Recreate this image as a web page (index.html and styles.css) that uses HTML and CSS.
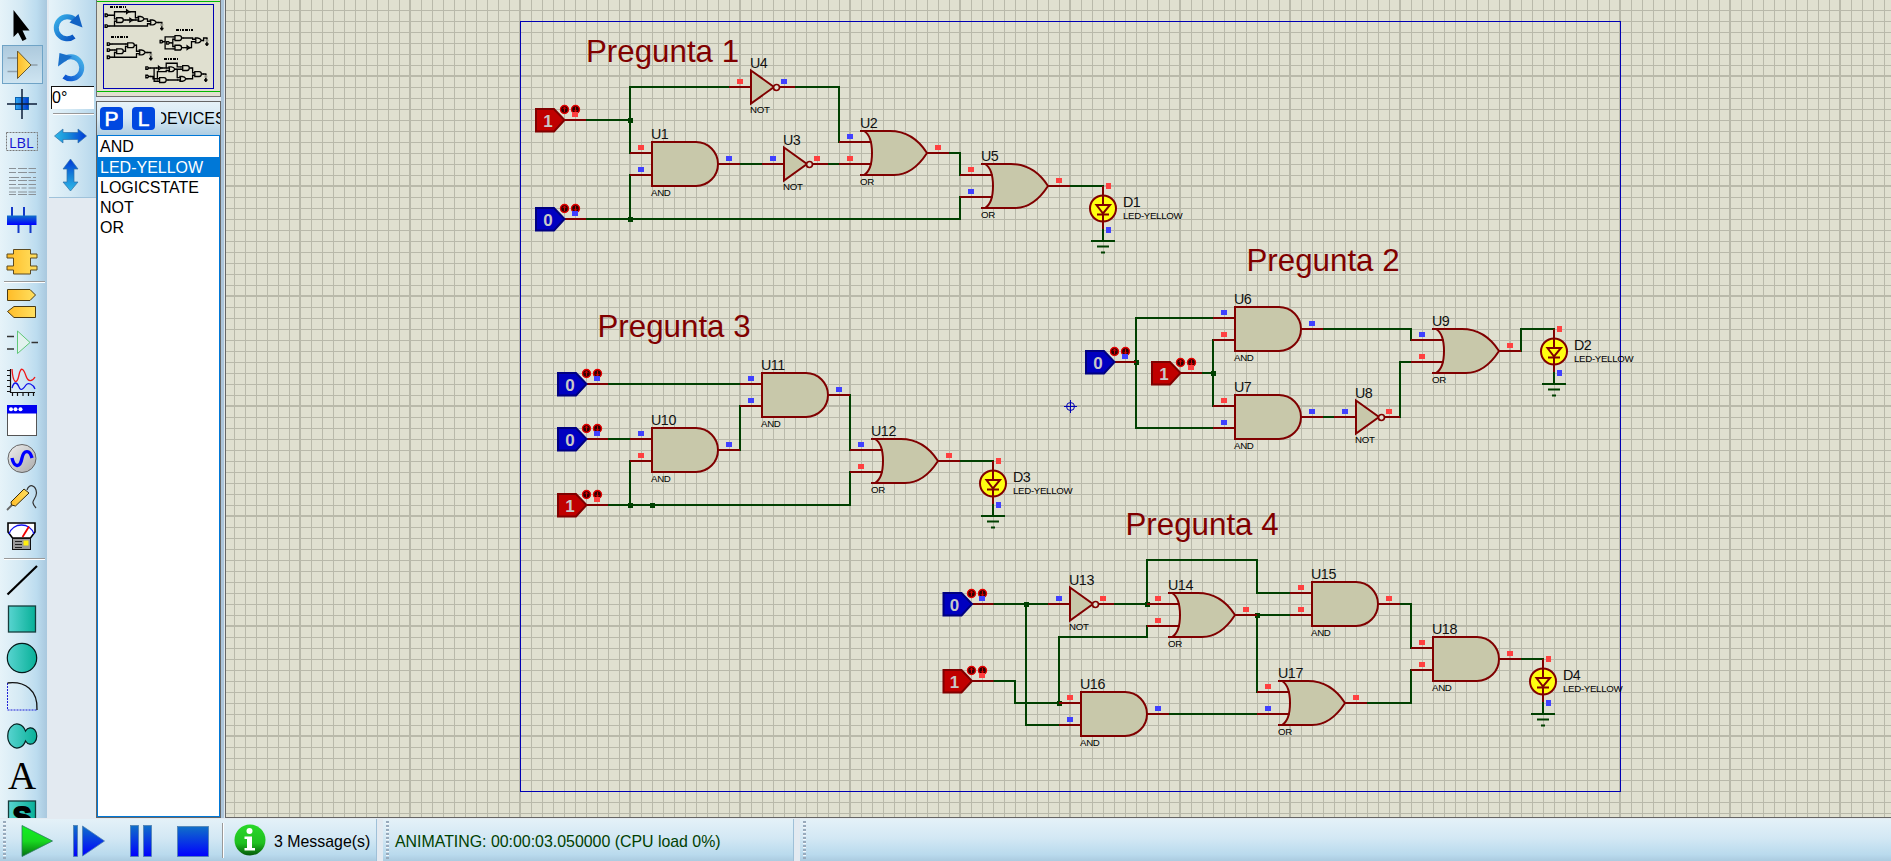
FILE: index.html
```html
<!DOCTYPE html>
<html lang="es">
<head>
<meta charset="utf-8">
<title>Schematic Capture</title>
<link rel="stylesheet" href="styles.css">
</head>
<body>
<div class="app">
<main class="work">
<nav class="tools">
  <svg class="tool" viewBox="0 0 47 39"><path d="M13.500 4V31L18 26.500L22.500 35L26.500 33L22.500 24.500H29.500Z" fill="#000"/></svg>
  <svg class="tool selected" viewBox="2 0 41 39"><path d="M7.500 13H17M7.500 26.500H17M30 20H37.500" stroke="#8fa0ac" stroke-width="1.300"/><path d="M17.500 6L31 20L17.500 33.500Z" fill="url(#gold)" stroke="#6b5a30"/></svg>
  <svg class="tool" viewBox="0 0 47 39"><rect x="15.500" y="13.500" width="13" height="12" fill="url(#blueH)" stroke="#0a60b0"/><path d="M7 20H37M22 5V35" stroke="#0c1c38" stroke-width="1.500"/></svg>
  <svg class="tool" viewBox="0 0 47 39"><rect x="6.500" y="9.500" width="31" height="18" fill="none" stroke="#777" stroke-dasharray="2 1"/><text x="9" y="24.500" class="lbl">LBL</text></svg>
  <svg class="tool" viewBox="0 0 47 39"><g stroke="#8a9197" stroke-width="1.200" stroke-dasharray="7 2 9 1.500 12 2"><path d="M9 6.500H36M9 10.500H36" /><path d="M9 15.500H36" stroke-dasharray="10 2"/><path d="M9 18.500H36M9 22.500H36"/><path d="M9 26H36" stroke-dasharray="11 1.500 5 2"/><path d="M9 30H36M9 32.500H36"/></g></svg>
  <svg class="tool" viewBox="0 0 47 39"><path d="M12 6V15M24 6V15M18.500 23V32M30.500 23V32" stroke="#1238c8" stroke-width="2"/><rect x="7" y="14.500" width="29.500" height="9.500" fill="url(#blueV)"/></svg>
  <svg class="tool" viewBox="0 0 47 39"><path d="M13.500 9.500H30.500V14H37V18H30.500V26H37V30H30.500V34H13.500V30H7V26H13.500V18H7V14H13.500Z" fill="url(#gold)" stroke="#5d4a20"/></svg>
  <i class="sep"></i>
  <svg class="tool" viewBox="0 0 47 39"><path d="M7.500 5.500H30L35.500 11L30 16.500H7.500Z" fill="url(#gold)" stroke="#4a3a14"/><path d="M35.500 22.500H14L7.500 27.500L14 33.500H35.500Z" fill="url(#gold)" stroke="#4a3a14"/></svg>
  <svg class="tool" viewBox="0 0 47 39"><path d="M7 13.500H14M7 26H14M31.500 19.500H38" stroke="#333" stroke-width="1.300"/><path d="M17.500 8L30 19.500L17.500 30.500Z" fill="#e2f2ee" stroke="#60c878"/></svg>
  <svg class="tool" viewBox="0 0 47 39"><path d="M10.500 7V30.500H35M7 8.500H10M7 13.500H10M7 18.500H10M7 24.500H10M7 29.500H10M12.500 31V34M17.500 31V34M23 31V34M28.500 31V34M33.500 31V34" fill="none" stroke="#111" stroke-width="1.200"/><path d="M12 7C13 22 17 23 19 13S24 8 26 14S32 20 35 15" fill="none" stroke="#f01818" stroke-width="1.300"/><path d="M12 26C14 19 17 20 19 25S24 26 26 23S33 22 35 27" fill="none" stroke="#1010e8" stroke-width="1.300"/></svg>
  <svg class="tool" viewBox="0 0 47 39"><rect x="7.500" y="4.500" width="29" height="30" fill="#fff" stroke="#555"/><rect x="7" y="4" width="30" height="8.500" fill="#0000f0"/><g fill="#fff"><circle cx="11" cy="8.200" r="2"/><circle cx="15.500" cy="8.200" r="2"/><circle cx="20.500" cy="8.200" r="2"/></g></svg>
  <svg class="tool" viewBox="0 0 47 39"><circle cx="22" cy="18.500" r="14" fill="url(#grey)" stroke="#666"/><path d="M12 18C14 27 20 29 22 18C24 9 30 10 32 18" fill="none" stroke="#0000ff" stroke-width="3.400"/></svg>
  <svg class="tool" viewBox="0 0 47 39"><path d="M7 31L12 26" stroke="#666" stroke-width="1.800"/><path d="M11 23L24 10L29 14L15.500 27L11.500 26Z" fill="url(#gold)" stroke="#3a2c0a"/><path d="M27 11C29 4 36 6 36.500 14C36 22 29 21 36 29" fill="none" stroke="#333" stroke-width="1.200"/></svg>
  <svg class="tool" viewBox="0 0 47 39"><path d="M8 5H35V14L30.500 20H12.500L8 14Z" fill="#fff" stroke="#000" stroke-width="1.600"/><path d="M9 16C13 4 30 4 34 16" fill="none" stroke="#1010f0" stroke-width="1.300"/><path d="M22.500 19L29 8.500" stroke="#f00000" stroke-width="1.800"/><rect x="12.500" y="20.500" width="18" height="11" fill="#999" stroke="#111"/><path d="M15 23.500H22M15 26.500H22M15 29.500H22" stroke="#222"/><rect x="23.500" y="22.500" width="5" height="5" fill="#ffee10"/></svg>
  <i class="sep last"></i>
  <svg class="tool" viewBox="0 0 47 39"><path d="M7.500 33.500L37 5" stroke="#000" stroke-width="2.200"/></svg>
  <svg class="tool" viewBox="0 0 47 39"><rect x="8.500" y="6" width="27" height="26" fill="url(#teal)" stroke="#163c3c" stroke-width="1.300"/></svg>
  <svg class="tool" viewBox="0 0 47 39"><circle cx="22" cy="19" r="14.700" fill="url(#teal)" stroke="#051818" stroke-width="1.200"/></svg>
  <svg class="tool" viewBox="0 0 47 39"><path d="M7.500 5V32H37" fill="none" stroke="#2020d8" stroke-dasharray="2 1"/><path d="M7.500 5C25 3 38 12 37 32" fill="none" stroke="#111" stroke-width="1.300"/></svg>
  <svg class="tool" viewBox="0 0 47 39"><path d="M25.500 14A9.300 12 0 1 0 25.500 24A6.300 8.200 0 1 0 25.500 14Z" fill="url(#teal)" stroke="#052020" stroke-width="1.200"/></svg>
  <svg class="tool" viewBox="0 0 47 39"><text x="22" y="33" class="bigA" text-anchor="middle">A</text></svg>
  <svg class="tool" viewBox="0 0 47 39"><rect x="8.500" y="6" width="27" height="28" fill="url(#teal)" stroke="#163c3c" stroke-width="1.300"/><text x="22" y="30.500" class="bigS" text-anchor="middle">S</text></svg>
</nav>
<aside class="orient">
  <div class="orient-panel">
    <svg viewBox="0 0 47 43" class="rot"><path d="M25 36.500A11 11 0 1 1 25.500 19.500" fill="none" stroke="url(#cyanBlue)" stroke-width="5"/><path d="M20.500 22.500L29.500 14L33.500 27.500Z" fill="#1262c4"/></svg>
    <svg viewBox="0 4 47 43" class="rot two"><path d="M15 36.500A11 11 0 1 0 14.500 19.500" fill="none" stroke="url(#blueCyan)" stroke-width="5" transform="translate(0 1)"/><path d="M10.500 14L23 17.500L9 27.500Z" fill="#1a70ca"/></svg>
    <div class="angle">0°</div>
    <i class="osep"></i>
    <svg viewBox="0 0 49 32" class="flip"><path d="M5.500 16L14 9V12.500H29V9L37.500 16L29 23V19.500H14V23Z" fill="url(#cyanToBlue)" stroke="#3070a8" stroke-width=".7"/></svg>
    <svg viewBox="0 0 49 40" class="flipv"><path d="M21.500 4L29 14H25V27H29L21.500 36L14 27H18V14H14Z" fill="url(#blueDown)" stroke="#3070a8" stroke-width=".7"/></svg>
  </div>
</aside>
<section class="side">
  <div class="overview">
    <svg viewBox="97 0 123 96">
      <path d="M97 1.500H220M97 91.500H220" stroke="#00b800"/>
      <rect x="103.500" y="4.500" width="110" height="84" fill="none" stroke="#0000b4"/>
      <g class="mini" transform="translate(103.500 2.200) scale(.1 .109) translate(-520 0)"><use href="#circuit"/></g>
      <path d="M110 7H126M176 30H193M111 37H128M164 59H178" stroke="#000" stroke-width="2" stroke-dasharray="3 1 1 1 2 1"/>
    </svg>
  </div>
  <div class="devices">
    <header class="dev-head"><b class="pick">P</b><b class="pick">L</b><span class="dev-title">DEVICES</span></header>
    <ul class="list"><li>AND</li><li class="on">LED-YELLOW</li><li>LOGICSTATE</li><li>NOT</li><li>OR</li></ul>
  </div>
</section>
<div class="splitter"></div>
<section class="canvas">
<svg viewBox="226 0 1665 817" class="sheet">
<defs>
  <linearGradient id="gold"><stop stop-color="#ffbc28"/><stop offset="1" stop-color="#ffe060"/></linearGradient>
  <linearGradient id="blueH"><stop stop-color="#30a8f0"/><stop offset="1" stop-color="#0038d0"/></linearGradient>
  <linearGradient id="blueV" x2="0" y2="1"><stop stop-color="#1070c8"/><stop offset="1" stop-color="#0000ff"/></linearGradient>
  <linearGradient id="green" x2="0" y2="1"><stop stop-color="#10f020"/><stop offset=".5" stop-color="#18d820"/><stop offset="1" stop-color="#047010"/></linearGradient>
  <linearGradient id="info" x2="0" y2="1"><stop stop-color="#28d828"/><stop offset=".6" stop-color="#20c020"/><stop offset="1" stop-color="#045808"/></linearGradient>
  <linearGradient id="grey" x2="1" y2="1"><stop stop-color="#eee"/><stop offset="1" stop-color="#aaa"/></linearGradient>
  <linearGradient id="teal"><stop stop-color="#58d4d0"/><stop offset="1" stop-color="#08b098"/></linearGradient>
  <linearGradient id="cyanBlue" x2="1" y2="1"><stop stop-color="#38b0e8"/><stop offset="1" stop-color="#0850c0"/></linearGradient>
  <linearGradient id="blueCyan" x1="1" y1="0" x2="0" y2="1"><stop stop-color="#48b4e8"/><stop offset="1" stop-color="#0850d0"/></linearGradient>
  <linearGradient id="cyanToBlue"><stop stop-color="#30b8e8"/><stop offset=".4" stop-color="#1890d8"/><stop offset="1" stop-color="#0038d8"/></linearGradient>
  <linearGradient id="blueDown" x2="0" y2="1"><stop stop-color="#0038d8"/><stop offset=".5" stop-color="#1480d8"/><stop offset="1" stop-color="#30b8e8"/></linearGradient>
  <pattern id="grid" x="519" y="75" width="110" height="110" patternUnits="userSpaceOnUse">
    <path class="minor" d="M12.500 0V110M23.500 0V110M34.500 0V110M45.500 0V110M56.500 0V110M67.500 0V110M78.500 0V110M89.500 0V110M100.500 0V110M0 12.500H110M0 23.500H110M0 34.500H110M0 45.500H110M0 56.500H110M0 67.500H110M0 78.500H110M0 89.500H110M0 100.500H110"/>
    <path class="major" d="M1 0V110M0 1H110"/>
  </pattern>
  <g id="and"><path class="pin" d="M-22-11H0M-22 11H0M66 0H88"/><path class="body" d="M0-22H44A22 22 0 0 1 44 22H0Z"/></g>
  <g id="or"><path class="body" d="M-1-22H29C46-22 57-14 66 0C57 14 46 22 33 22H-1H3C8 19 11 11 11 0C11-11 8-19 3-22Z"/><path class="pin" d="M-22-11H10.500M-22 11H10.500M66 0H88"/></g>
  <g id="not"><path class="pin" d="M-22 0H0M28 0H44"/><path class="body" d="M0-16.500L23 0L0 16.500Z"/><circle class="ring" cx="25.500" cy=".5" r="3"/></g>
  <g id="led"><path class="pin" d="M0 0V10M0 36V44"/><circle class="glow" cx="0" cy="22.500" r="13"/><path class="diode" d="M-6.500 19H7L0 27.500ZM-6 28.500H6M0 9V20M0 28V36"/><path class="wire" d="M0 44V55M-11 55H11M-5 60.500H5M-1 66.500H1"/></g>
  <g id="state"><path class="pin" d="M0 0H22"/><path class="tag" d="M-28-11H-10L.5 0L-10 11.500H-28Z"/></g>
  <g id="knobs"><circle cx=".5" cy="-10.500" r="4" class="knob"/><circle cx="11.500" cy="-10.500" r="4" class="knob"/><path class="karrow" d="M.5-8V-13M-1.200-11L.5-13L2.200-11M11.500-13V-8M9.800-10L11.500-8L13.200-10"/></g>
  <rect id="hi" x="-3" y="-8" width="6" height="5" fill="#ff4040"/>
  <rect id="lo" x="-3" y="-8" width="6" height="5" fill="#4040ff"/>
  <g id="ledpins"><rect x="3" y="-3" width="5" height="6" fill="#ff4040"/><rect x="3" y="41" width="5" height="6" fill="#4040ff"/></g>
</defs>
<rect x="226" y="0" width="1665" height="817" fill="url(#grid)"/>
<rect x="520.500" y="21.500" width="1100" height="770" class="frame"/>
<g class="origin"><circle cx="1070.500" cy="406.500" r="4"/><path d="M1064 406.500H1077M1070.500 400V413"/></g>
<g id="circuit">
  <path class="wire" d="M586 120H630M729 87H630V153M795 87H839V142M740 164H762M828 164H839M949 153H960V175M586 219H960V197M630 219V175M1070 186H1103"/>
  <path class="wire" d="M608 384H740M608 439H630M740 450V406M850 395V450M608 505H850V472M630 505V461M960 461H993"/>
  <path class="wire" d="M1213 318H1136V428H1213M1202 373H1213M1213 340V406M1323 329H1411V340M1323 417H1334M1400 417V362H1411M1521 351V329H1554"/>
  <path class="wire" d="M993 604H1048M1026 604V725H1059M1114 604H1147V560H1257V593H1290M1257 615H1290M1257 615V692M993 681H1015V703H1059V637H1147V626M1169 714H1257M1367 703H1411V670M1400 604H1411V648M1521 659H1543"/>
  <path class="dot" d="M628 118h5v5h-5zM628 217h5v5h-5zM628 503h5v5h-5zM650 503h5v5h-5zM1134 360h5v5h-5zM1211 371h5v5h-5zM1024 602h5v5h-5zM1145 602h5v5h-5zM1255 613h5v5h-5zM1057 701h5v5h-5z"/>
  <use href="#and" x="652" y="164"/><use href="#and" x="762" y="395"/><use href="#and" x="652" y="450"/><use href="#and" x="1235" y="329"/><use href="#and" x="1235" y="417"/><use href="#and" x="1081" y="714"/><use href="#and" x="1312" y="604"/><use href="#and" x="1433" y="659"/>
  <use href="#or" x="861" y="153"/><use href="#or" x="982" y="186"/><use href="#or" x="872" y="461"/><use href="#or" x="1433" y="351"/><use href="#or" x="1169" y="615"/><use href="#or" x="1279" y="703"/>
  <use href="#not" x="751" y="87"/><use href="#not" x="784" y="164"/><use href="#not" x="1356" y="417"/><use href="#not" x="1070" y="604"/>
  <use href="#led" x="1103" y="186"/><use href="#led" x="1554" y="329"/><use href="#led" x="993" y="461"/><use href="#led" x="1543" y="659"/>
  <g class="one"><use href="#state" x="564" y="120"/><use href="#state" x="586" y="505"/><use href="#state" x="1180" y="373"/><use href="#state" x="971.500" y="681"/></g>
  <g class="zero"><use href="#state" x="564" y="219"/><use href="#state" x="586" y="384"/><use href="#state" x="586" y="439"/><use href="#state" x="1114" y="362"/><use href="#state" x="971.500" y="604"/></g>
</g>
<use href="#knobs" x="564" y="120"/><use href="#knobs" x="564" y="219"/><use href="#knobs" x="586" y="384"/><use href="#knobs" x="586" y="439"/><use href="#knobs" x="586" y="505"/><use href="#knobs" x="1114" y="362"/><use href="#knobs" x="1180" y="373"/><use href="#knobs" x="971" y="604"/><use href="#knobs" x="971" y="681"/>
<use href="#hi" x="575" y="120"/><use href="#lo" x="575" y="219"/><use href="#lo" x="597" y="384"/><use href="#lo" x="597" y="439"/><use href="#hi" x="597" y="505"/><use href="#lo" x="1125" y="362"/><use href="#hi" x="1191" y="373"/><use href="#lo" x="982" y="604"/><use href="#hi" x="982" y="681"/>
<use href="#hi" x="740" y="87"/><use href="#lo" x="784" y="87"/><use href="#hi" x="641" y="153"/><use href="#lo" x="641" y="175"/><use href="#lo" x="729" y="164"/><use href="#lo" x="773" y="164"/><use href="#hi" x="817" y="164"/><use href="#lo" x="850" y="142"/><use href="#hi" x="850" y="164"/><use href="#hi" x="938" y="153"/><use href="#hi" x="971" y="175"/><use href="#lo" x="971" y="197"/><use href="#hi" x="1059" y="186"/>
<use href="#lo" x="751" y="384"/><use href="#lo" x="751" y="406"/><use href="#lo" x="839" y="395"/><use href="#lo" x="641" y="439"/><use href="#hi" x="641" y="461"/><use href="#lo" x="729" y="450"/><use href="#lo" x="861" y="450"/><use href="#hi" x="861" y="472"/><use href="#hi" x="949" y="461"/>
<use href="#lo" x="1224" y="318"/><use href="#hi" x="1224" y="340"/><use href="#lo" x="1312" y="329"/><use href="#hi" x="1224" y="406"/><use href="#lo" x="1224" y="428"/><use href="#lo" x="1312" y="417"/><use href="#lo" x="1345" y="417"/><use href="#hi" x="1389" y="417"/><use href="#lo" x="1422" y="340"/><use href="#hi" x="1422" y="362"/><use href="#hi" x="1510" y="351"/>
<use href="#lo" x="1059" y="604"/><use href="#hi" x="1103" y="604"/><use href="#hi" x="1158" y="604"/><use href="#hi" x="1158" y="626"/><use href="#hi" x="1246" y="615"/><use href="#hi" x="1301" y="593"/><use href="#hi" x="1301" y="615"/><use href="#hi" x="1389" y="604"/><use href="#hi" x="1070" y="703"/><use href="#lo" x="1070" y="725"/><use href="#lo" x="1158" y="714"/><use href="#hi" x="1268" y="692"/><use href="#lo" x="1268" y="714"/><use href="#hi" x="1356" y="703"/><use href="#hi" x="1422" y="648"/><use href="#hi" x="1422" y="670"/><use href="#hi" x="1510" y="659"/>
<use href="#ledpins" x="1103" y="186"/><use href="#ledpins" x="1554" y="329"/><use href="#ledpins" x="993" y="461"/><use href="#ledpins" x="1543" y="659"/>
<g class="digit"><text x="548" y="126.500">1</text><text x="548" y="225.500">0</text><text x="570" y="390.500">0</text><text x="570" y="445.500">0</text><text x="570" y="511.500">1</text><text x="1098" y="368.500">0</text><text x="1164" y="379.500">1</text><text x="954.500" y="610.500">0</text><text x="954.500" y="687.500">1</text></g>
<g class="title"><text x="586" y="62">Pregunta 1</text><text x="1246.500" y="271">Pregunta 2</text><text x="597.500" y="337">Pregunta 3</text><text x="1125.500" y="535">Pregunta 4</text></g>
<g class="ref"><text x="651" y="139">U1</text><text x="860" y="128">U2</text><text x="783" y="145">U3</text><text x="750" y="68">U4</text><text x="981" y="161">U5</text><text x="1234" y="304">U6</text><text x="1234" y="392">U7</text><text x="1355" y="398">U8</text><text x="1432" y="326">U9</text><text x="651" y="425">U10</text><text x="761" y="370">U11</text><text x="871" y="436">U12</text><text x="1069" y="585">U13</text><text x="1168" y="590">U14</text><text x="1311" y="579">U15</text><text x="1080" y="689">U16</text><text x="1278" y="678">U17</text><text x="1432" y="634">U18</text><text x="1123" y="207">D1</text><text x="1574" y="350">D2</text><text x="1013" y="482">D3</text><text x="1563" y="680">D4</text></g>
<g class="kind"><text x="651" y="196">AND</text><text x="761" y="427">AND</text><text x="651" y="482">AND</text><text x="1234" y="361">AND</text><text x="1234" y="449">AND</text><text x="1080" y="746">AND</text><text x="1311" y="636">AND</text><text x="1432" y="691">AND</text><text x="860" y="185">OR</text><text x="981" y="218">OR</text><text x="871" y="493">OR</text><text x="1432" y="383">OR</text><text x="1168" y="647">OR</text><text x="1278" y="735">OR</text><text x="750" y="113">NOT</text><text x="783" y="190">NOT</text><text x="1355" y="443">NOT</text><text x="1069" y="630">NOT</text><text x="1123" y="219">LED-YELLOW</text><text x="1574" y="362">LED-YELLOW</text><text x="1013" y="494">LED-YELLOW</text><text x="1563" y="692">LED-YELLOW</text></g>
</svg>
</section>
</main>
<footer class="bar">
  <div class="cell play">
    <i class="grip"></i>
    <svg viewBox="8 819 213 42" class="transport"><path d="M22 825.500L52.500 841L22 856.500Z" fill="url(#green)" stroke="#2a7a60" stroke-width=".8"/><g fill="url(#blueV)" stroke="#5080b0" stroke-width=".8"><path d="M82.500 826L104.500 841L82.500 856Z"/><rect x="73.500" y="825.500" width="4" height="31"/><rect x="130.500" y="825.500" width="8" height="31"/><rect x="143.500" y="825.500" width="8" height="31"/><rect x="177.500" y="826.500" width="31" height="30"/></g></svg>
    <i class="vsep"></i>
    <svg viewBox="0 0 32 32" class="info"><circle cx="16" cy="16" r="15.500" fill="url(#info)"/><circle cx="15.500" cy="7" r="3" fill="#fff"/><path d="M10.500 12.500H18V24H21V26.500H10.500V24H13V15H10.500Z" fill="#fff"/></svg>
    <span class="msg">3 Message(s)</span>
  </div>
  <div class="cell status"><i class="grip"></i><span class="anim">ANIMATING: 00:00:03.050000 (CPU load 0%)</span></div>
  <div class="cell rest"><i class="grip"></i></div>
</footer>
</div>
</body>
</html>
```
FILE: styles.css
```css
* { box-sizing: border-box; }
body { margin: 0; font-family: "Liberation Sans", Arial, sans-serif; font-size: 16px; color: #000; overflow: hidden; }
.app { display: flex; flex-direction: column; width: 1891px; height: 861px; background: #e3eaf1; }
.work { display: flex; height: 818px; overflow: hidden; }

.tools { width: 47px; height: 818px; padding-top: 6px; overflow: hidden; flex: none; background: linear-gradient(90deg, #e6f3f9, #d4e9f4 45%, #bcdcef 78%, #a9c8de); }
.tool { display: block; width: 47px; height: 39px; }
.selected { width: 41px; margin-left: 2px; background: linear-gradient(#acc9dd, #cfe5f1); outline: 1px solid #6fa3c6; outline-offset: -1px; }
.sep { display: block; height: 5px; margin: 0 2px 0 4px; background: linear-gradient(#999 0 1px, #fff 1px 2px) 0 2px / 100% 2px no-repeat; }
.sep.last { height: 4px; background-position: 0 1px; }
.lbl { font: 14.500px "Open Sans", sans-serif; fill: #1414d0; }
.bigA { font: 39px "Liberation Serif", serif; }
.bigS { font: bold 28px "Liberation Sans", sans-serif; stroke: #000; stroke-width: 2px; }

.orient { width: 49px; flex: none; padding-left: 2px; }
.orient-panel { height: 198px; border-bottom: 1px solid #9fc2da; background: linear-gradient(90deg, #e6f3f9, #d4e9f4 45%, #b6d7ec); }
.rot { display: block; width: 47px; height: 43px; }
.angle { width: 43px; height: 23px; margin-left: 2px; border: 1px solid #111; border-width: 1px 0 0 1px; background: #fff; font-size: 16px; line-height: 21px; }
.osep { display: block; height: 2px; margin: 4px 2px 5px 4px; background: linear-gradient(#999 0 1px, #fff 1px); }
.flip { display: block; width: 49px; height: 32px; }
.flipv { display: block; width: 49px; height: 40px; margin-top: 3px; }

.side { width: 125px; flex: none; display: flex; flex-direction: column; gap: 4px; }
.overview { height: 97px; border: 1px solid #707070; border-top: 0; background: #e0e0d0; }
.overview svg { display: block; width: 123px; height: 96px; }
.devices { flex: 1; border: 1px solid #666; display: flex; flex-direction: column; }
.dev-head { height: 33px; display: flex; align-items: center; gap: 9px; padding-left: 3px; overflow: hidden; background: linear-gradient(#e6f2f9, #d5e8f4 50%, #aecde2); }
.pick { width: 23px; height: 23px; flex: none; border-radius: 4px; background: #0048e0; color: #fff; font: 21px/23px "Liberation Sans", sans-serif; text-align: center; -webkit-text-stroke: .6px #fff; }
.dev-title { width: 59px; margin-left: -3px; display: flex; justify-content: center; overflow: hidden; flex: none; }
.list { flex: 1; margin: 0; padding: 0; list-style: none; background: #fff; border: 1px solid #0078d7; }
.list li { height: 20px; line-height: 21px; padding-left: 2px; }
.list li:first-child { height: 21px; }
.list li.on { background: #0078d7; color: #fff; }
.splitter { width: 5px; flex: none; background: linear-gradient(90deg, #adc5da 0 3px, #dfe8ee 3px 4px, #666 4px); }

.canvas { flex: 1; height: 818px; background: #e0e0d0; border-bottom: 1px solid #666; }
.sheet { display: block; width: 1665px; height: 817px; }
.minor { stroke: #b9b9aa; stroke-width: 1; }
.major { stroke: #b9b9aa; stroke-width: 2; }
.frame { fill: none; stroke: #0000b4; }
.origin { fill: none; stroke: #0000b4; }
.wire { fill: none; stroke: var(--ink, #004000); stroke-width: var(--sw, 2); stroke-linecap: square; }
.dot { fill: var(--ink, #004000); }
.pin { fill: none; stroke: var(--ink, #800000); stroke-width: var(--sw, 2); }
.body { fill: var(--none, #c8c8aa); stroke: var(--ink, #800000); stroke-width: var(--sw, 2); }
.ring { fill: var(--none, #e0e0d0); stroke: var(--ink, #800000); stroke-width: var(--sw, 1.700); }
.glow { fill: var(--none, #ffff10); stroke: var(--ink, #800000); stroke-width: 2; }
.diode { fill: none; stroke: var(--ink, #800000); stroke-width: 2; }
.tag { fill: var(--none, var(--tag)); stroke: var(--ink, var(--edge)); stroke-width: var(--sw, 2); }
.one { --tag: #c00000; --edge: #800000; }
.zero { --tag: #0000c0; --edge: #000080; }
.mini { --ink: #000; --sw: 13; --none: none; }
.knob { fill: #300; stroke: #e80000; stroke-width: 1.400; }
.karrow { fill: none; stroke: #e00000; stroke-width: .9; }
.digit { font-weight: bold; font-size: 17px; fill: #c8c8c8; text-anchor: middle; }
.title { font-size: 31.300px; fill: #800000; }
.ref { font-size: 14.300px; letter-spacing: -.45px; fill: #111; }
.kind { font-size: 9.700px; letter-spacing: -.32px; fill: #000; }

.bar { flex: 1; display: flex; gap: 6px; padding-top: 1px; }
.cell { display: flex; align-items: center; background: linear-gradient(#e4f1f8, #d3e8f4 45%, #b9daed 85%, #abcbe0); border-right: 1px solid #9fc0d8; }
.grip { width: 3px; height: 38px; margin-left: 3px; flex: none; background: repeating-linear-gradient(#98aabc 0 2px, #f4f8fb 2px 3px, transparent 3px 4px); }
.play { width: 377px; }
.transport { width: 213px; height: 42px; margin-left: 2px; }
.vsep { width: 2px; height: 35px; margin-left: 1px; background: linear-gradient(90deg, #999 0 1px, #fff 1px); flex: none; }
.info { width: 32px; height: 32px; margin-left: 10px; flex: none; }
.msg { margin-left: 8px; padding-top: 3px; white-space: nowrap; font-size: 15.900px; }
.status { width: 411px; }
.anim { margin-left: 6px; padding-top: 3px; color: #004000; white-space: nowrap; font-size: 15.900px; }
.rest { flex: 1; border-right: 0; }
```
